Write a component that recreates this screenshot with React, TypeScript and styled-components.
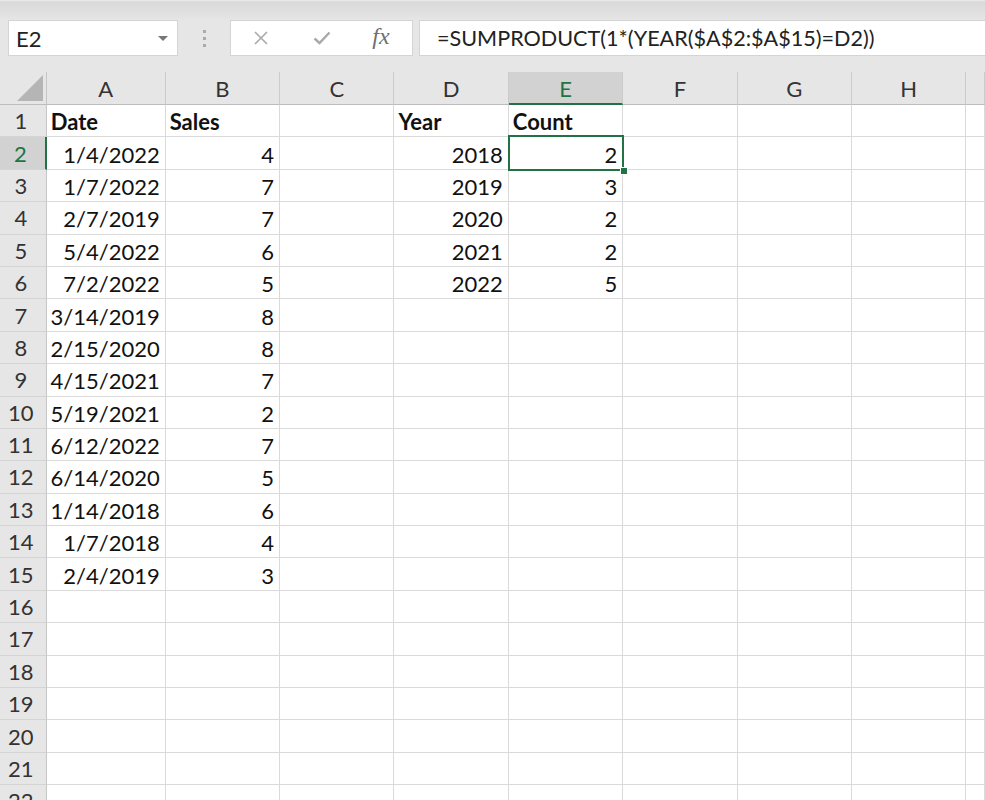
import React from 'react'
import styled, { createGlobalStyle } from 'styled-components'

const GREEN = '#217346'
const GRID = '#dadada'
const HEADER_BG = '#e6e6e6'

const GlobalStyle = createGlobalStyle`
  html, body {
    margin: 0;
    padding: 0;
    width: 985px;
    height: 800px;
    overflow: hidden;
    background: ${HEADER_BG};
    font-family: Lato, "Open Sans", sans-serif;
  }
`

const Toolbar = styled.div`
  display: flex;
  align-items: stretch;
  height: 36px;
  padding: 20px 0 16px 8px;
  background: linear-gradient(to bottom, #ececec 0px, #d9d9d9 2px, #e4e4e4 18px, ${HEADER_BG} 20px);
`

const NameBox = styled.div`
  box-sizing: border-box;
  width: 170px;
  display: flex;
  align-items: center;
  justify-content: space-between;
  padding: 0 9px 0 7px;
  background: #fff;
  border: 1px solid #d4d4d4;
  font-size: 22px;
  color: #222;
`

const DropArrow = styled.span`
  width: 0;
  height: 0;
  border-left: 5px solid transparent;
  border-right: 5px solid transparent;
  border-top: 5px solid #777;
`

const Grip = styled.div`
  width: 52px;
  display: flex;
  flex-direction: column;
  align-items: center;
  justify-content: center;
  gap: 4px;

  span {
    width: 3px;
    height: 3px;
    background: #aaa;
  }
`

const ButtonsBox = styled.div`
  box-sizing: border-box;
  width: 183px;
  display: grid;
  grid-template-columns: 60px 62px 60px;
  align-items: center;
  justify-items: center;
  background: #fff;
  border: 1px solid #d4d4d4;
`

const FxLabel = styled.span`
  font-family: "Liberation Serif", serif;
  font-style: italic;
  font-size: 24px;
  color: #6f6f6f;
  margin-top: -4px;
  margin-right: 4px;
`

const FormulaBox = styled.div`
  flex: 1;
  box-sizing: border-box;
  margin-left: 6px;
  margin-right: -2px;
  display: flex;
  align-items: center;
  padding-left: 17px;
  background: #fff;
  border: 1px solid #d4d4d4;
  font-size: 21.6px;
  color: #222;
  white-space: nowrap;
`

const Sheet = styled.div`
  display: grid;
  grid-template-columns: 46.7px 119px repeat(7, 114.4px) 1fr;
  grid-template-rows: 33px;
  grid-auto-rows: 32.4px;
  width: 985px;
  background: #fff;
  font-size: 22px;
  color: #111;
`

const Corner = styled.div`
  position: relative;
  background: ${HEADER_BG};
  border-right: 1px solid #c6c6c6;
  border-bottom: 1px solid #bdbdbd;

  &::after {
    content: '';
    position: absolute;
    right: 3px;
    bottom: 3px;
    width: 0;
    height: 0;
    border-left: 26px solid transparent;
    border-bottom: 26px solid #b5b5b5;
  }
`

const ColHeader = styled.div<{ $active?: boolean }>`
  display: flex;
  align-items: center;
  justify-content: center;
  background: ${(p) => (p.$active ? '#d2d2d2' : HEADER_BG)};
  color: ${(p) => (p.$active ? GREEN : '#333')};
  border-right: 1px solid #cbcbcb;
  border-bottom: ${(p) => (p.$active ? `2px solid ${GREEN}` : '1px solid #bdbdbd')};
  padding-top: ${(p) => (p.$active ? '1px' : '0')};
`

const RowHeader = styled.div<{ $active?: boolean }>`
  display: flex;
  align-items: center;
  justify-content: center;
  padding-right: 4px;
  background: ${(p) => (p.$active ? '#d2d2d2' : HEADER_BG)};
  color: ${(p) => (p.$active ? GREEN : '#333')};
  border-right: ${(p) => (p.$active ? `2px solid ${GREEN}` : '1px solid #c6c6c6')};
  border-bottom: 1px solid #d4d4d4;
`

const Cell = styled.div<{ $align?: 'left' | 'right'; $bold?: boolean; $selected?: boolean }>`
  position: relative;
  display: flex;
  align-items: center;
  justify-content: ${(p) => (p.$align === 'right' ? 'flex-end' : 'flex-start')};
  padding: 2px 5px 0 4px;
  font-weight: ${(p) => (p.$bold ? 700 : 400)};
  border-right: 1px solid ${GRID};
  border-bottom: 1px solid ${GRID};
  white-space: nowrap;

  ${(p) =>
    p.$selected &&
    `
    z-index: 2;
    &::before {
      content: '';
      position: absolute;
      top: -2px;
      left: -1px;
      right: -2px;
      bottom: -2px;
      border: 2px solid ${GREEN};
      pointer-events: none;
    }
    &::after {
      content: '';
      position: absolute;
      right: -6px;
      bottom: -6px;
      width: 6px;
      height: 6px;
      background: ${GREEN};
      border: 1px solid #fff;
    }
  `}
`

const columns = ['A', 'B', 'C', 'D', 'E', 'F', 'G', 'H', '']

const dates = [
  '1/4/2022', '1/7/2022', '2/7/2019', '5/4/2022', '7/2/2022', '3/14/2019', '2/15/2020',
  '4/15/2021', '5/19/2021', '6/12/2022', '6/14/2020', '1/14/2018', '1/7/2018', '2/4/2019'
]
const sales = [4, 7, 7, 6, 5, 8, 8, 7, 2, 7, 5, 6, 4, 3]
const years = [2018, 2019, 2020, 2021, 2022]
const counts = [2, 3, 2, 2, 5]

type CellData = { text: string; align?: 'left' | 'right'; bold?: boolean }

function cellAt(row: number, col: number): CellData | null {
  if (row === 1) {
    const heads: Record<number, string> = { 0: 'Date', 1: 'Sales', 3: 'Year', 4: 'Count' }
    return heads[col] ? { text: heads[col], bold: true } : null
  }
  const i = row - 2
  if (col === 0 && dates[i]) return { text: dates[i], align: 'right' }
  if (col === 1 && sales[i] !== undefined) return { text: String(sales[i]), align: 'right' }
  if (col === 3 && years[i]) return { text: String(years[i]), align: 'right' }
  if (col === 4 && counts[i] !== undefined) return { text: String(counts[i]), align: 'right' }
  return null
}

const XIcon = () => (
  <svg width="16" height="16" viewBox="0 0 16 16">
    <path d="M2 2 L14 14 M14 2 L2 14" stroke="#a9a9a9" strokeWidth="1.6" fill="none" />
  </svg>
)

const CheckIcon = () => (
  <svg width="18" height="14" viewBox="0 0 18 14">
    <path d="M1.5 7.5 L6.5 12 L16.5 1.5" stroke="#a9a9a9" strokeWidth="2.4" fill="none" />
  </svg>
)

export default function App() {
  const rows = Array.from({ length: 22 }, (_, i) => i + 1)
  return (
    <>
      <GlobalStyle />
      <Toolbar>
        <NameBox>
          E2
          <DropArrow />
        </NameBox>
        <Grip>
          <span />
          <span />
          <span />
        </Grip>
        <ButtonsBox>
          <XIcon />
          <CheckIcon />
          <FxLabel>fx</FxLabel>
        </ButtonsBox>
        <FormulaBox>=SUMPRODUCT(1*(YEAR($A$2:$A$15)=D2))</FormulaBox>
      </Toolbar>
      <Sheet>
        <Corner />
        {columns.map((c, ci) => (
          <ColHeader key={ci} $active={c === 'E'}>
            {c}
          </ColHeader>
        ))}
        {rows.map((r) => (
          <React.Fragment key={r}>
            <RowHeader $active={r === 2}>{r}</RowHeader>
            {columns.map((c, ci) => {
              const d = cellAt(r, ci)
              return (
                <Cell
                  key={ci}
                  $align={d?.align}
                  $bold={d?.bold}
                  $selected={r === 2 && c === 'E'}
                >
                  {d?.text}
                </Cell>
              )
            })}
          </React.Fragment>
        ))}
      </Sheet>
    </>
  )
}
